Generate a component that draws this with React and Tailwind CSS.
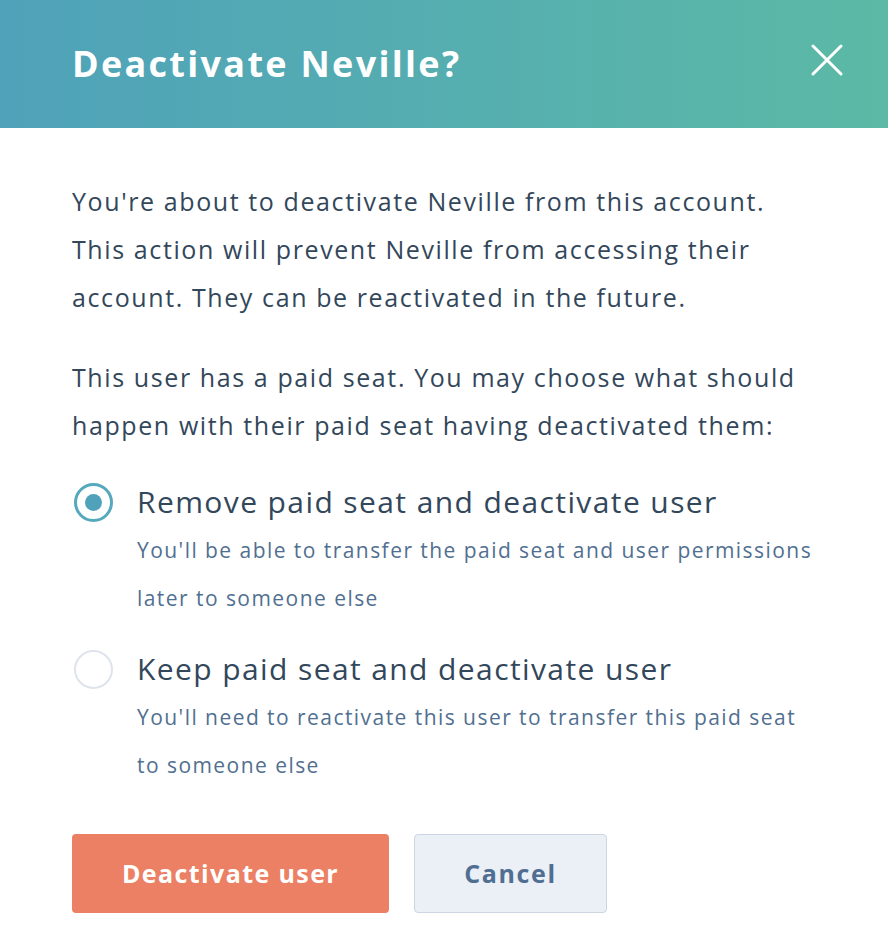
import React from "react";

export default function App() {
  const font = { fontFamily: '"Open Sans", "Noto Sans", sans-serif' };
  return (
    <div className="w-[888px] h-[941px] bg-white overflow-hidden" style={font}>
      <div className="h-[128px] bg-gradient-to-r from-[#4fa2b9] to-[#5cb9a5] flex items-center justify-between pl-[72px] pr-[45px]">
        <h1 className="text-[36px] font-bold text-white leading-none tracking-[2.3px]">Deactivate Neville?</h1>
        <svg width="32" height="32" viewBox="0 0 32 32" fill="none" stroke="white" strokeWidth="3" strokeLinecap="round" className="-mt-[8px]">
          <line x1="2" y1="2" x2="30" y2="30" />
          <line x1="30" y1="2" x2="2" y2="30" />
        </svg>
      </div>
      <div className="pl-[72px] pr-[20px] pt-[49px]">
        <p className="text-[25px] leading-[48px] text-[#33475b] tracking-[1.6px] whitespace-nowrap">
          You're about to deactivate Neville from this account.<br />
          This action will prevent Neville from accessing their<br />
          account. They can be reactivated in the future.
        </p>
        <p className="text-[25px] leading-[48px] text-[#33475b] mt-[32px] tracking-[1.6px] whitespace-nowrap">
          This user has a paid seat. You may choose what should<br />
          happen with their paid seat having deactivated them:
        </p>
        <div className="mt-[35px] flex flex-col gap-[29px]">
          <div className="flex">
            <div className="w-[65px] shrink-0 h-[36px] flex items-center">
              <div className="w-[39px] h-[39px] rounded-full border-[3px] border-[#55a9bd] flex items-center justify-center ml-[2px]">
                <div className="w-[17px] h-[17px] rounded-full bg-[#4fa2b9]" />
              </div>
            </div>
            <div className="whitespace-nowrap">
              <div className="text-[30px] leading-[36px] text-[#33475b] tracking-[1.4px]">Remove paid seat and deactivate user</div>
              <div className="mt-[6px] text-[21px] leading-[48px] text-[#516f90] tracking-[1.45px]">
                You'll be able to transfer the paid seat and user permissions<br />later to someone else
              </div>
            </div>
          </div>
          <div className="flex">
            <div className="w-[65px] shrink-0 h-[36px] flex items-center">
              <div className="w-[39px] h-[39px] rounded-full border-2 border-[#dfe3eb] ml-[2px]" />
            </div>
            <div className="whitespace-nowrap">
              <div className="text-[30px] leading-[36px] text-[#33475b] tracking-[1.4px]">Keep paid seat and deactivate user</div>
              <div className="mt-[6px] text-[21px] leading-[48px] text-[#516f90] tracking-[1.45px]">
                You'll need to reactivate this user to transfer this paid seat<br />to someone else
              </div>
            </div>
          </div>
        </div>
        <div className="mt-[45px] flex gap-[25px]">
          <button className="w-[317px] h-[79px] rounded-[4px] bg-[#ec8064] text-white text-[25px] font-bold tracking-[1.4px]">Deactivate user</button>
          <button className="w-[193px] h-[79px] rounded-[4px] bg-[#eaf0f6] border border-[#cbd6e2] text-[#506e91] text-[25px] font-bold tracking-[1.6px]">Cancel</button>
        </div>
      </div>
    </div>
  );
}
